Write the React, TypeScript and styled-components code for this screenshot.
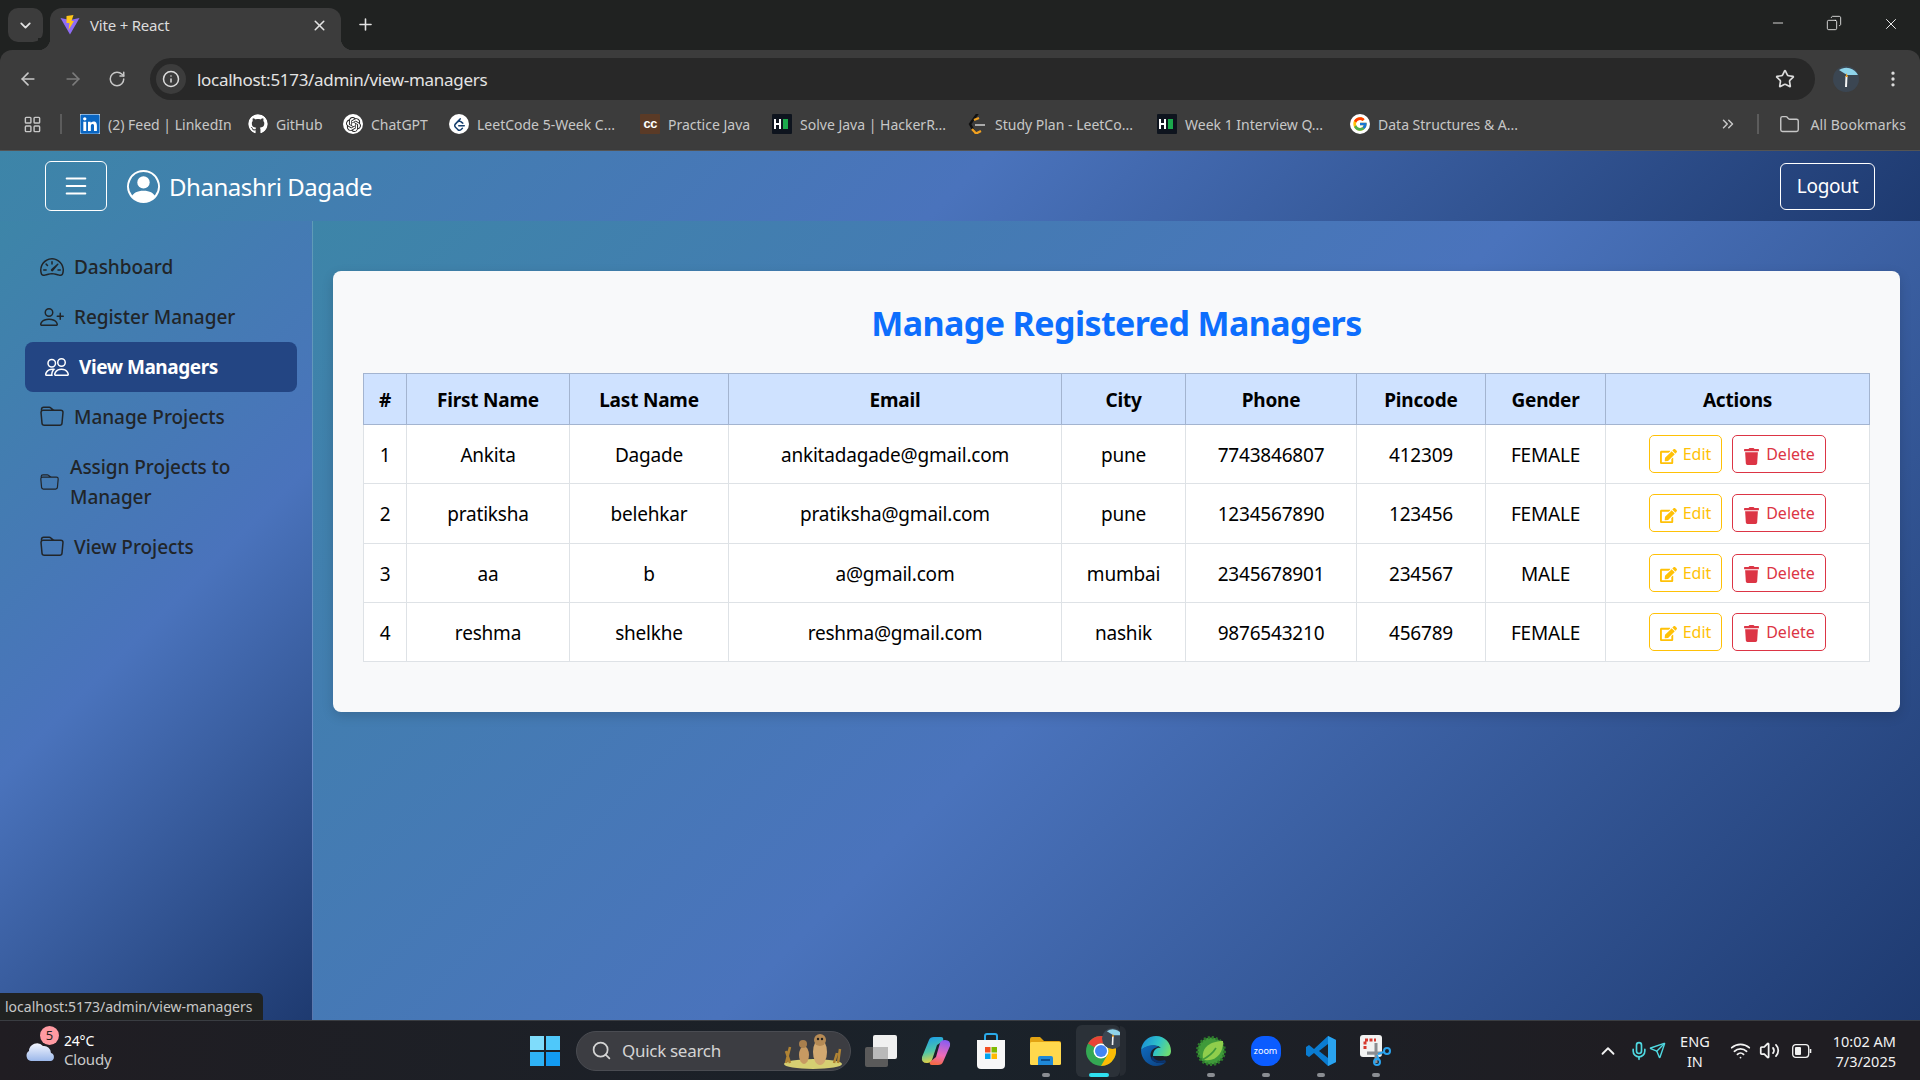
import { ReactNode } from 'react';
import styled, { createGlobalStyle } from 'styled-components';
import {
  ArrowLeft,
  ArrowRight,
  ChevronDown,
  ChevronUp,
  ChevronsRight,
  Copy,
  EllipsisVertical,
  Folder,
  Info,
  LayoutGrid,
  Mic,
  Minus,
  Plus,
  RotateCw,
  Search,
  Send,
  Star,
  Volume2,
  Wifi,
  X,
} from 'lucide-react';
import {
  BsFolder,
  BsList,
  BsPeople,
  BsPersonCircle,
  BsPersonPlus,
  BsSpeedometer2,
} from 'react-icons/bs';
import { FaEdit, FaGithub, FaLinkedin, FaTrash } from 'react-icons/fa';
import { FcGoogle } from 'react-icons/fc';
import { SiLeetcode, SiOpenai } from 'react-icons/si';

const UI_FONT = '"Noto Sans", "Open Sans", sans-serif';
const GRADIENT = 'linear-gradient(135deg, #3d85a8 0%, #4a73bc 50%, #1e3a70 100%)';

const GlobalStyle = createGlobalStyle`
  html, body {
    margin: 0;
    padding: 0;
    height: 100%;
    overflow: hidden;
  }
  * {
    box-sizing: border-box;
  }
  body {
    font-family: ${UI_FONT};
  }
`;

const Page = styled.div`
  position: relative;
  display: flex;
  flex-direction: column;
  width: 1920px;
  height: 1080px;
  overflow: hidden;
  background: #202221;
`;

/* browser chrome */

const TabStrip = styled.div`
  display: flex;
  align-items: flex-end;
  height: 50px;
  padding-left: 8px;
  background: #202221;
  color: #e3e3e3;
`;

const TabMenu = styled.div`
  display: flex;
  align-items: center;
  justify-content: center;
  align-self: flex-start;
  width: 35px;
  height: 34px;
  margin-top: 8px;
  margin-right: 7px;
  border-radius: 10px;
  background: #3c3c3c;
`;

const Tab = styled.div`
  position: relative;
  display: flex;
  align-items: center;
  width: 291px;
  height: 42px;
  padding: 0 13px 8px 10px;
  border-radius: 12px 12px 0 0;
  background: #3c3c3c;
  font-size: 15px;
  letter-spacing: -0.2px;
  &::before,
  &::after {
    content: '';
    position: absolute;
    bottom: 0;
    width: 12px;
    height: 12px;
  }
  &::before {
    left: -12px;
    background: radial-gradient(circle at 0 0, #202221 12px, #3c3c3c 12.5px);
  }
  &::after {
    right: -12px;
    background: radial-gradient(circle at 100% 0, #202221 12px, #3c3c3c 12.5px);
  }
`;

const TabTitle = styled.span`
  flex: 1;
  margin-left: 10px;
  color: #dcdcdc;
`;

const NewTab = styled.div`
  display: flex;
  margin: 0 0 16px 15px;
`;

const WindowButtons = styled.div`
  display: flex;
  align-self: flex-start;
  gap: 40px;
  margin: 15px 20px 0 auto;
`;

const Toolbar = styled.div`
  display: flex;
  align-items: flex-start;
  height: 58px;
  padding: 8px 0 0 18px;
  border-radius: 12px 12px 0 0;
  background: #3c3c3c;
  color: #c7c7c7;
`;

const NavIcons = styled.div`
  display: flex;
  align-items: center;
  gap: 25px;
  height: 42px;
  margin-right: 24px;
`;

const Omnibox = styled.div`
  display: flex;
  align-items: center;
  width: 1665px;
  height: 42px;
  padding: 0 20px 0 6px;
  border-radius: 21px;
  background: #282828;
`;

const InfoChip = styled.div`
  display: flex;
  align-items: center;
  justify-content: center;
  width: 30px;
  height: 30px;
  margin-right: 11px;
  border-radius: 50%;
  background: #3c3c3c;
  color: #dcdcdc;
`;

const UrlText = styled.span`
  flex: 1;
  color: #e3e3e3;
  font-size: 17px;
  letter-spacing: -0.3px;
`;

const ProfileBlock = styled.div`
  display: flex;
  align-items: center;
  gap: 24px;
  height: 42px;
  margin-left: 18px;
`;

const BookmarkBar = styled.div`
  display: flex;
  align-items: center;
  height: 43px;
  padding: 0 0 10px 23px;
  background: #3c3c3c;
  border-bottom: 1px solid #555;
  color: #c7c7c7;
  font-size: 14px;
  letter-spacing: 0;
`;

const BarDivider = styled.span<{ $gap: number }>`
  width: 2px;
  height: 20px;
  margin: 0 ${(p) => p.$gap}px;
  background: #5c5c5c;
`;

const Bookmark = styled.div<{ $w: number }>`
  display: flex;
  align-items: center;
  gap: 8px;
  width: ${(p) => p.$w}px;
  white-space: nowrap;
`;

const BookmarkIcon = styled.span<{ $bg?: string; $round?: boolean }>`
  display: flex;
  align-items: center;
  justify-content: center;
  flex: none;
  width: 20px;
  height: 20px;
  overflow: hidden;
  border-radius: ${(p) => (p.$round ? '50%' : '1px')};
  background: ${(p) => p.$bg || 'transparent'};
  color: #fff;
`;

const CcMark = styled.span`
  font-family: 'Liberation Mono', monospace;
  font-size: 13px;
  font-weight: 700;
  letter-spacing: -1px;
`;

const BookmarkEnd = styled.div`
  display: flex;
  align-items: center;
  margin-left: auto;
  padding-right: 14px;
  white-space: nowrap;
`;

const EndLabel = styled.span`
  margin-left: 10px;
  letter-spacing: 0.1px;
`;

/* app */

const Navbar = styled.header`
  display: flex;
  align-items: center;
  flex: none;
  height: 70px;
  padding: 0 45px;
  background: ${GRADIENT};
  box-shadow: 0 2px 4px rgba(0, 0, 0, 0.1);
  color: #fff;
`;

const MenuButton = styled.button`
  display: flex;
  align-items: center;
  justify-content: center;
  width: 62px;
  height: 50px;
  padding: 0;
  border: 1px solid #fff;
  border-radius: 6px;
  background: transparent;
  color: #fff;
`;

const Brand = styled.div`
  display: flex;
  align-items: center;
  gap: 9px;
  margin-left: 20px;
  font-size: 24px;
  letter-spacing: -0.45px;
`;

const LogoutButton = styled.button`
  width: 95px;
  height: 47px;
  margin-left: auto;
  padding: 0;
  border: 1px solid #fff;
  border-radius: 6px;
  background: transparent;
  color: #fff;
  font-family: ${UI_FONT};
  font-size: 19px;
  letter-spacing: -0.3px;
`;

const Body = styled.div`
  display: flex;
  flex: 1;
  min-height: 0;
`;

const Sidebar = styled.aside`
  flex: none;
  width: 313px;
  padding: 21px 15px 0 25px;
  background: ${GRADIENT};
  border-right: 1px solid rgba(255, 255, 255, 0.18);
`;

const SideItem = styled.div<{ $active?: boolean; $tall?: boolean }>`
  display: flex;
  align-items: center;
  gap: ${(p) => (p.$tall ? 11 : 10)}px;
  height: ${(p) => (p.$tall ? 80 : 50)}px;
  padding: 0 ${(p) => (p.$tall ? 40 : 10)}px 0 ${(p) => (p.$active ? 20 : 15)}px;
  border-radius: 8px;
  background: ${(p) => (p.$active ? '#234583' : 'transparent')};
  color: ${(p) => (p.$active ? '#fff' : '#212529')};
  font-size: 19px;
  font-weight: ${(p) => (p.$active ? 700 : 500)};
  line-height: 30px;
  letter-spacing: ${(p) => (p.$active ? -0.45 : -0.05)}px;
  svg {
    flex: none;
  }
`;

const Main = styled.main`
  flex: 1;
  padding: 50px 20px 0;
  background: ${GRADIENT};
`;

const Card = styled.section`
  height: 441px;
  padding: 31px 30px 0;
  border-radius: 8px;
  background: #f8f9fa;
  box-shadow: 0 4px 12px rgba(0, 0, 0, 0.15);
`;

const Title = styled.h2`
  height: 43px;
  margin: 0 0 28px;
  color: #0d6efd;
  font-size: 34px;
  font-weight: 700;
  line-height: 43px;
  letter-spacing: -0.6px;
  text-align: center;
`;

const Table = styled.table`
  width: 1506px;
  border-collapse: collapse;
  table-layout: fixed;
  background: #fff;
  color: #000;
  font-size: 19px;
  letter-spacing: -0.2px;
  text-align: center;
`;

const HeadCell = styled.th`
  height: 51px;
  padding: 1px 0 0;
  border: 1px solid #a3b4d0;
  background: #cfe2ff;
  font-weight: 700;
`;

const Cell = styled.td`
  height: 59.25px;
  padding: 2px 0 0;
  border: 1px solid #dee2e6;
`;

const Actions = styled.div`
  display: flex;
  justify-content: center;
  gap: 10px;
  margin-top: -2px;
`;

const ActionButton = styled.button<{ $tone: string; $w: number }>`
  display: flex;
  align-items: center;
  justify-content: center;
  gap: 6px;
  width: ${(p) => p.$w}px;
  height: 38px;
  padding: 0;
  border: 1px solid ${(p) => p.$tone};
  border-radius: 5px;
  background: transparent;
  color: ${(p) => p.$tone};
  font-family: ${UI_FONT};
  font-size: 16px;
  letter-spacing: 0;
  svg {
    margin-top: 4px;
  }
`;

const StatusBubble = styled.div`
  position: absolute;
  left: 0;
  bottom: 60px;
  width: 263px;
  height: 27px;
  padding-left: 5px;
  border-radius: 0 5px 0 0;
  background: #202221;
  color: #c7c7c7;
  font-size: 14px;
  line-height: 27px;
`;

/* windows taskbar */

const Taskbar = styled.footer`
  display: flex;
  align-items: center;
  flex: none;
  height: 60px;
  border-top: 1px solid #3a3d42;
  background: linear-gradient(90deg, #201d22 0%, #1a222a 50%, #1f1d22 85%);
  color: #fff;
`;

const Weather = styled.div`
  position: relative;
  display: flex;
  align-items: center;
  gap: 9px;
  width: 530px;
  padding-left: 25px;
`;

const WeatherBadge = styled.span`
  position: absolute;
  left: 40px;
  top: -7px;
  width: 19px;
  height: 19px;
  border-radius: 50%;
  background: #ff9aa2;
  color: #222;
  font-size: 13px;
  line-height: 19px;
  text-align: center;
`;

const WeatherText = styled.div`
  margin-top: -2px;
  font-size: 14px;
  line-height: 19px;
  letter-spacing: -0.2px;
`;

const MutedLine = styled.div`
  color: #c9c9c9;
  font-size: 15px;
`;

const StartLogo = styled.div`
  display: grid;
  grid-template-columns: 14px 14px;
  gap: 2px;
  margin-right: 16px;
`;

const StartPane = styled.span<{ $tone: string }>`
  height: 14px;
  background: ${(p) => p.$tone};
`;

const SearchPill = styled.div`
  display: flex;
  align-items: center;
  width: 275px;
  height: 40px;
  padding: 0 6px 0 14px;
  border: 1px solid #4a4c52;
  border-radius: 20px;
  background: #3c3d42;
  color: #d4d4d4;
  font-size: 17px;
  letter-spacing: -0.3px;
`;

const SearchLabel = styled.span`
  flex: 1;
  margin-left: 10px;
`;

const TaskIcons = styled.div`
  display: flex;
  margin-left: 2px;
`;

const TaskSlot = styled.div<{ $active?: boolean }>`
  position: relative;
  display: flex;
  align-items: center;
  justify-content: center;
  width: 55px;
  height: 52px;
  ${(p) =>
    p.$active &&
    `
    &::before {
      content: '';
      position: absolute;
      left: 3px;
      top: 0;
      width: 44px;
      height: 52px;
      border-radius: 6px;
      background: #2b3138;
    }
    &::after {
      content: '';
      position: absolute;
      left: 47px;
      top: 1px;
      width: 6px;
      height: 50px;
      border-radius: 0 6px 6px 0;
      background: #262b32;
    }
  `}
`;

const ChromeWrap = styled.span`
  position: relative;
  display: flex;
`;

const AvatarOverlay = styled.span`
  position: absolute;
  right: -7px;
  top: -8px;
  display: flex;
`;

const RunDot = styled.span<{ $active?: boolean }>`
  position: absolute;
  left: 50%;
  bottom: 0;
  width: ${(p) => (p.$active ? 20 : 8)}px;
  height: 4px;
  margin-left: ${(p) => (p.$active ? -12 : -4)}px;
  border-radius: 2px;
  background: ${(p) => (p.$active ? '#2fe0f0' : '#8a8d92')};
`;

const ZoomBadge = styled.span`
  display: flex;
  align-items: center;
  justify-content: center;
  width: 30px;
  height: 30px;
  border-radius: 42%;
  background: #0b5cff;
  color: #fff;
  font-size: 9px;
`;

const Tray = styled.div`
  display: flex;
  align-items: center;
  margin-left: auto;
  padding-right: 24px;
  color: #f2f2f2;
`;

const TrayGroup = styled.div<{ $ml: number; $gap?: number; $tone?: string }>`
  display: flex;
  align-items: center;
  gap: ${(p) => p.$gap || 0}px;
  margin-left: ${(p) => p.$ml}px;
  color: ${(p) => p.$tone || 'inherit'};
`;

const BatterySlot = styled.span`
  display: flex;
  margin-left: 4px;
`;

const LangBlock = styled.div`
  margin-left: 14px;
  font-size: 14.5px;
  line-height: 20px;
  text-align: center;
`;

const Clock = styled.div`
  margin-left: 21px;
  font-size: 14.5px;
  line-height: 20px;
  text-align: right;
`;

const COLUMNS: [string, number][] = [
  ['#', 43],
  ['First Name', 163],
  ['Last Name', 159],
  ['Email', 333],
  ['City', 124],
  ['Phone', 171],
  ['Pincode', 129],
  ['Gender', 120],
  ['Actions', 264],
];

const MANAGERS = [
  ['1', 'Ankita', 'Dagade', 'ankitadagade@gmail.com', 'pune', '7743846807', '412309', 'FEMALE'],
  ['2', 'pratiksha', 'belehkar', 'pratiksha@gmail.com', 'pune', '1234567890', '123456', 'FEMALE'],
  ['3', 'aa', 'b', 'a@gmail.com', 'mumbai', '2345678901', '234567', 'MALE'],
  ['4', 'reshma', 'shelkhe', 'reshma@gmail.com', 'nashik', '9876543210', '456789', 'FEMALE'],
];

function ViteLogo() {
  return (
    <svg width="20" height="22" viewBox="0 0 20 20">
      <path d="M0.5 3 L10 5 L19.5 3 L10 19.5 Z" fill="#8f6cf5" />
      <path d="M6.5 1 L13.5 0 L11.5 6 L14 6 L8.5 15 L9.5 8 L6.5 8 Z" fill="#ffc517" />
    </svg>
  );
}

function HackerRankMark() {
  return (
    <svg width="20" height="24" viewBox="0 0 20 24">
      <rect width="20" height="24" fill="#0e141e" />
      <path d="M3 7v10M8 7v10M3 12h5" stroke="#fff" strokeWidth="2" />
      <rect x="11" y="7" width="5" height="10" fill="#1ba94c" />
    </svg>
  );
}

function StudyPlanMark() {
  return (
    <svg width="20" height="24" viewBox="0 0 20 24" fill="none">
      <path d="M11 1 L3 12 L8 21" stroke="#111" strokeWidth="2.4" />
      <path d="M5 17 L9 21.5 L14 19" stroke="#f0a020" strokeWidth="2.4" />
      <path d="M7 8 L12 6" stroke="#f0a020" strokeWidth="2.4" />
      <path d="M8 13h10" stroke="#aaa" strokeWidth="2" />
    </svg>
  );
}

function ProfileAvatar({ size }: { size: number }) {
  return (
    <svg width={size} height={size} viewBox="0 0 26 26">
      <circle cx="13" cy="13" r="13" fill="#3b4652" />
      <path d="M6 4 A13 13 0 0 1 25 9 L14 9 Z" fill="#8fd4ea" />
      <path d="M12.5 10 L14.5 10 L14 21 L12 21 Z" fill="#f4f4f4" />
      <path d="M13.5 7 L15 11 L12.5 11 Z" fill="#f0a020" />
    </svg>
  );
}

function RestoreIcon() {
  return <Copy size={16} strokeWidth={1.2} color="#fff" style={{ transform: 'scaleX(-1)' }} />;
}

function CloudIcon() {
  return (
    <svg width="30" height="24" viewBox="0 0 30 24">
      <defs>
        <linearGradient id="cloud" x1="0" y1="0" x2="0" y2="1">
          <stop offset="0" stopColor="#f3f6ff" />
          <stop offset="1" stopColor="#9cb8ea" />
        </linearGradient>
      </defs>
      <path d="M6 22 A5.5 5.5 0 0 1 4 12 A8 8 0 0 1 18 7 A7 7 0 0 1 26 14 A4.2 4.2 0 0 1 26 22 Z" fill="url(#cloud)" />
    </svg>
  );
}

function MeerkatArt() {
  return (
    <svg width="62" height="36" viewBox="0 0 62 36">
      <ellipse cx="31" cy="31" rx="29" ry="5" fill="#d6cf72" />
      <path d="M4 30 L8 14 M8 30 L4 18 M56 30 L58 16 M52 30 L55 20" stroke="#b08334" strokeWidth="2.5" />
      <ellipse cx="22" cy="22" rx="5" ry="9" fill="#c79a62" />
      <circle cx="21" cy="11" r="4" fill="#a97f4d" />
      <ellipse cx="38" cy="19" rx="7" ry="13" fill="#d2a870" />
      <circle cx="38" cy="7" r="6" fill="#b58a55" />
      <circle cx="36" cy="6" r="1.2" fill="#222" />
      <circle cx="40" cy="6" r="1.2" fill="#222" />
    </svg>
  );
}

function TaskViewIcon() {
  return (
    <svg width="32" height="32" viewBox="0 0 32 32">
      <rect x="0" y="12" width="23" height="20" rx="2" fill="#5a5a5a" />
      <rect x="8" y="0" width="24" height="24" rx="2" fill="#f0f0f0" />
      <rect x="8" y="12" width="15" height="12" fill="#b9b9b9" />
    </svg>
  );
}

function CopilotIcon() {
  return (
    <svg width="30" height="28" viewBox="0 0 30 28">
      <defs>
        <linearGradient id="cop-a" x1="0.3" y1="0" x2="0.5" y2="1">
          <stop offset="0" stopColor="#1d9fe8" />
          <stop offset="0.55" stopColor="#4fc6a8" />
          <stop offset="1" stopColor="#f2d23a" />
        </linearGradient>
        <linearGradient id="cop-b" x1="0.6" y1="0" x2="0.4" y2="1">
          <stop offset="0" stopColor="#8a5cf0" />
          <stop offset="0.6" stopColor="#ee6cb8" />
          <stop offset="1" stopColor="#f46a45" />
        </linearGradient>
      </defs>
      <path d="M8 3 Q9 0 13 0 H20 Q23 0 22 4 L16 8 L11 23 Q10 26 6 26 Q0 26 1 20 Z" fill="url(#cop-a)" />
      <path d="M22 25 Q21 28 17 28 H11 Q8 28 9 25 L15 20 L19 6 Q20 3 24 3 Q30 3 29 9 Z" fill="url(#cop-b)" />
    </svg>
  );
}

function StoreIcon() {
  return (
    <svg width="30" height="36" viewBox="0 0 30 36">
      <path d="M9 8 V3 Q9 1 11 1 H19 Q21 1 21 3 V8" fill="none" stroke="#2aa9e8" strokeWidth="2" />
      <path d="M1 7 H29 V32 Q29 36 25 36 H5 Q1 36 1 32 Z" fill="#f7f7f7" />
      <rect x="9" y="14" width="5.5" height="5.5" fill="#f25022" />
      <rect x="15.5" y="14" width="5.5" height="5.5" fill="#7fba00" />
      <rect x="9" y="20.5" width="5.5" height="5.5" fill="#00a4ef" />
      <rect x="15.5" y="20.5" width="5.5" height="5.5" fill="#ffb900" />
    </svg>
  );
}

function ExplorerIcon() {
  return (
    <svg width="31" height="28" viewBox="0 0 31 28">
      <path d="M0 2 Q0 0 2 0 H10 L14 4 H29 Q31 4 31 6 V10 H0 Z" fill="#e2a313" />
      <rect x="0" y="5" width="31" height="23" rx="1.5" fill="#ffd84d" />
      <path d="M8 28 V21 Q8 19 10 19 H21 Q23 19 23 21 V28 Z" fill="#1f88d8" />
      <rect x="11" y="22" width="9" height="2" fill="#0d4f8f" />
    </svg>
  );
}

function ChromeIcon() {
  return (
    <svg width="30" height="30" viewBox="0 0 30 30">
      <circle cx="15" cy="15" r="15" fill="#34a853" />
      <path d="M15 0 A15 15 0 0 1 28 7.5 H15 A7.5 7.5 0 0 0 8.5 11.2 L2 7.5 A15 15 0 0 1 15 0 Z" fill="#ea4335" />
      <path d="M28 7.5 A15 15 0 0 1 15 30 L21.5 18.7 A7.5 7.5 0 0 0 21.5 11.2 Z" fill="#fbbc05" />
      <circle cx="15" cy="15" r="7.5" fill="#fff" />
      <circle cx="15" cy="15" r="6" fill="#4285f4" />
    </svg>
  );
}

function EdgeIcon() {
  return (
    <svg width="30" height="30" viewBox="0 0 30 30">
      <defs>
        <linearGradient id="edge-top" x1="0" y1="0.3" x2="1" y2="0.6">
          <stop offset="0" stopColor="#1a8fd8" />
          <stop offset="0.55" stopColor="#2fc3c8" />
          <stop offset="1" stopColor="#6fdc70" />
        </linearGradient>
        <linearGradient id="edge-low" x1="0" y1="0" x2="1" y2="1">
          <stop offset="0" stopColor="#0f6cc0" />
          <stop offset="1" stopColor="#0c3f7e" />
        </linearGradient>
      </defs>
      <path d="M15 0 C24 0 30 7 30 15 C30 20 26 21 22 20 L12 20 C12 13 17 11 20 12 C17 8 6 9 0 14 C1 6 7 0 15 0 Z" fill="url(#edge-top)" />
      <path d="M0 14 C5 9 13 8 18 11 C12 11 8 16 10 22 C12 27 19 28 25 26 C22 29 18 30 15 30 C7 30 0 23 0 14 Z" fill="url(#edge-low)" />
      <path d="M12 20 C13 24 18 26 24 24 L25 26 C19 28 12 27 10 22 Z" fill="#0a3470" />
    </svg>
  );
}

function SpringIcon() {
  return (
    <svg width="30" height="32" viewBox="0 0 30 32">
      <circle cx="15" cy="16" r="13.5" fill="#3f9a3a" stroke="#2d7a2c" strokeDasharray="2 2" strokeWidth="3" />
      <path d="M7 24 C5 12 15 6 27 6 C28 17 20 27 9 25 Z" fill="#8fce4c" />
      <path d="M6 25 C12 22 17 18 20 13" fill="none" stroke="#3f9a3a" strokeWidth="1.6" />
    </svg>
  );
}

function VsCodeIcon() {
  return (
    <svg width="30" height="30" viewBox="0 0 30 30">
      <path d="M22 0 L30 4 V26 L22 30 L8 17 L3 21 L0 19 V11 L3 9 L8 13 Z" fill="#0a7cd1" />
      <path d="M22 8 L13 15 L22 22 Z" fill="#1a222a" />
      <path d="M22 0 L30 4 V26 L22 30 Z" fill="#2aa3ef" />
    </svg>
  );
}

function SnipIcon() {
  return (
    <svg width="32" height="32" viewBox="0 0 32 32">
      <rect x="0" y="0" width="22" height="22" rx="3" fill="#f2f2f2" />
      <path d="M5 14 V5 H16" fill="none" stroke="#d7382e" strokeWidth="3" strokeDasharray="3 1.5" />
      <path d="M16 8 V19 H7" fill="none" stroke="#bbb" strokeWidth="1.5" />
      <path d="M16 8 V28 M7 18 H22" stroke="#8a8d92" strokeWidth="3" />
      <circle cx="17" cy="27" r="3" fill="none" stroke="#2aa3ef" strokeWidth="2" />
      <circle cx="27" cy="16" r="3" fill="none" stroke="#2aa3ef" strokeWidth="2" />
      <path d="M19 25 L17 20 M24 17 L18 19" stroke="#2aa3ef" strokeWidth="2" />
    </svg>
  );
}

function BatteryIcon() {
  return (
    <svg width="20" height="14" viewBox="0 0 20 14" fill="none">
      <rect x="0.7" y="0.7" width="16" height="12.6" rx="3" stroke="#f2f2f2" strokeWidth="1.3" />
      <rect x="3" y="3" width="6" height="8" rx="1" fill="#f2f2f2" />
      <path d="M18.5 5v4" stroke="#f2f2f2" strokeWidth="1.6" />
    </svg>
  );
}

const BOOKMARKS: { label: string; width: number; icon: ReactNode }[] = [
  { label: '(2) Feed | LinkedIn', width: 168, icon: <BookmarkIcon $bg="#fff"><FaLinkedin size={22} color="#0a66c2" /></BookmarkIcon> },
  { label: 'GitHub', width: 95, icon: <BookmarkIcon $round><FaGithub size={20} color="#fff" /></BookmarkIcon> },
  { label: 'ChatGPT', width: 106, icon: <BookmarkIcon $round $bg="#fff"><SiOpenai size={15} color="#222" /></BookmarkIcon> },
  { label: 'LeetCode 5-Week C...', width: 191, icon: <BookmarkIcon $round $bg="#fff"><SiLeetcode size={13} color="#17406f" /></BookmarkIcon> },
  { label: 'Practice Java', width: 132, icon: <BookmarkIcon $bg="#5a3a26"><CcMark>cc</CcMark></BookmarkIcon> },
  { label: 'Solve Java | HackerR...', width: 195, icon: <BookmarkIcon><HackerRankMark /></BookmarkIcon> },
  { label: 'Study Plan - LeetCo...', width: 190, icon: <BookmarkIcon><StudyPlanMark /></BookmarkIcon> },
  { label: 'Week 1 Interview Q...', width: 193, icon: <BookmarkIcon><HackerRankMark /></BookmarkIcon> },
  { label: 'Data Structures & A...', width: 190, icon: <BookmarkIcon $round $bg="#fff"><FcGoogle size={16} /></BookmarkIcon> },
];

const NAV_ITEMS: { label: string; icon: ReactNode; active?: boolean; tall?: boolean }[] = [
  { label: 'Dashboard', icon: <BsSpeedometer2 size={24} /> },
  { label: 'Register Manager', icon: <BsPersonPlus size={24} /> },
  { label: 'View Managers', icon: <BsPeople size={24} />, active: true },
  { label: 'Manage Projects', icon: <BsFolder size={24} /> },
  { label: 'Assign Projects to Manager', icon: <BsFolder size={19} />, tall: true },
  { label: 'View Projects', icon: <BsFolder size={24} /> },
];

const TASK_ICONS: { icon: ReactNode; dot?: boolean; active?: boolean }[] = [
  { icon: <TaskViewIcon /> },
  { icon: <CopilotIcon /> },
  { icon: <StoreIcon /> },
  { icon: <ExplorerIcon />, dot: true },
  {
    icon: (
      <ChromeWrap>
        <ChromeIcon />
        <AvatarOverlay>
          <ProfileAvatar size={21} />
        </AvatarOverlay>
      </ChromeWrap>
    ),
    dot: true,
    active: true,
  },
  { icon: <EdgeIcon /> },
  { icon: <SpringIcon />, dot: true },
  { icon: <ZoomBadge>zoom</ZoomBadge>, dot: true },
  { icon: <VsCodeIcon />, dot: true },
  { icon: <SnipIcon />, dot: true },
];

export default function App() {
  return (
    <Page>
      <GlobalStyle />
      <TabStrip>
        <TabMenu>
          <ChevronDown size={17} strokeWidth={2.5} />
        </TabMenu>
        <Tab>
          <ViteLogo />
          <TabTitle>Vite + React</TabTitle>
          <X size={17} strokeWidth={2.2} />
        </Tab>
        <NewTab>
          <Plus size={19} strokeWidth={2} />
        </NewTab>
        <WindowButtons>
          <Minus size={16} strokeWidth={1.2} color="#fff" />
          <RestoreIcon />
          <X size={18} strokeWidth={1.2} color="#fff" />
        </WindowButtons>
      </TabStrip>

      <Toolbar>
        <NavIcons>
          <ArrowLeft size={20} />
          <ArrowRight size={20} color="#7b7b7b" />
          <RotateCw size={18} />
        </NavIcons>
        <Omnibox>
          <InfoChip>
            <Info size={18} />
          </InfoChip>
          <UrlText>localhost:5173/admin/view-managers</UrlText>
          <Star size={20} color="#dcdcdc" />
        </Omnibox>
        <ProfileBlock>
          <ProfileAvatar size={26} />
          <EllipsisVertical size={20} color="#dcdcdc" />
        </ProfileBlock>
      </Toolbar>

      <BookmarkBar>
        <LayoutGrid size={19} strokeWidth={1.8} />
        <BarDivider $gap={18} />
        {BOOKMARKS.map((b) => (
          <Bookmark key={b.label} $w={b.width}>
            {b.icon}
            {b.label}
          </Bookmark>
        ))}
        <BookmarkEnd>
          <ChevronsRight size={18} />
          <BarDivider $gap={20} />
          <Folder size={21} strokeWidth={1.6} />
          <EndLabel>All Bookmarks</EndLabel>
        </BookmarkEnd>
      </BookmarkBar>

      <Navbar>
        <MenuButton>
          <BsList size={30} />
        </MenuButton>
        <Brand>
          <BsPersonCircle size={33} />
          Dhanashri Dagade
        </Brand>
        <LogoutButton>Logout</LogoutButton>
      </Navbar>

      <Body>
        <Sidebar>
          {NAV_ITEMS.map((item) => (
            <SideItem key={item.label} $active={item.active} $tall={item.tall}>
              {item.icon}
              <span>{item.label}</span>
            </SideItem>
          ))}
        </Sidebar>
        <Main>
          <Card>
            <Title>Manage Registered Managers</Title>
            <Table>
              <colgroup>
                {COLUMNS.map(([name, width]) => (
                  <col key={name} width={width} />
                ))}
              </colgroup>
              <thead>
                <tr>
                  {COLUMNS.map(([name]) => (
                    <HeadCell key={name}>{name}</HeadCell>
                  ))}
                </tr>
              </thead>
              <tbody>
                {MANAGERS.map((row) => (
                  <tr key={row[0]}>
                    {row.map((value, i) => (
                      <Cell key={i}>{value}</Cell>
                    ))}
                    <Cell>
                      <Actions>
                        <ActionButton $tone="#ffc107" $w={73}>
                          <FaEdit size={17} />
                          Edit
                        </ActionButton>
                        <ActionButton $tone="#dc3545" $w={94}>
                          <FaTrash size={17} />
                          Delete
                        </ActionButton>
                      </Actions>
                    </Cell>
                  </tr>
                ))}
              </tbody>
            </Table>
          </Card>
        </Main>
      </Body>

      <Taskbar>
        <Weather>
          <CloudIcon />
          <WeatherBadge>5</WeatherBadge>
          <WeatherText>
            24°C
            <MutedLine>Cloudy</MutedLine>
          </WeatherText>
        </Weather>
        <StartLogo>
          <StartPane $tone="#7fdcfb" />
          <StartPane $tone="#4fc8fa" />
          <StartPane $tone="#2fb2f5" />
          <StartPane $tone="#129bf2" />
        </StartLogo>
        <SearchPill>
          <Search size={21} />
          <SearchLabel>Quick search</SearchLabel>
          <MeerkatArt />
        </SearchPill>
        <TaskIcons>
          {TASK_ICONS.map((t, i) => (
            <TaskSlot key={i} $active={t.active}>
              {t.icon}
              {t.dot && <RunDot $active={t.active} />}
            </TaskSlot>
          ))}
        </TaskIcons>
        <Tray>
          <ChevronUp size={22} />
          <TrayGroup $ml={10} $tone="#4fd8e0">
            <Mic size={20} />
            <Send size={17} />
          </TrayGroup>
          <LangBlock>
            ENG
            <br />
            IN
          </LangBlock>
          <TrayGroup $ml={20} $gap={8}>
            <Wifi size={21} />
            <Volume2 size={21} />
            <BatterySlot>
              <BatteryIcon />
            </BatterySlot>
          </TrayGroup>
          <Clock>
            10:02 AM
            <br />
            7/3/2025
          </Clock>
        </Tray>
      </Taskbar>

      <StatusBubble>localhost:5173/admin/view-managers</StatusBubble>
    </Page>
  );
}
